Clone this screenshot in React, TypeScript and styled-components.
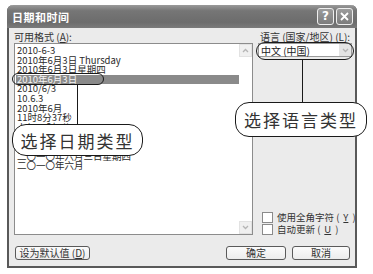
import styled, { createGlobalStyle } from "styled-components";

const Global = createGlobalStyle`
  html, body {
    margin: 0;
    padding: 0;
    background: #fff;
  }
  body {
    font-family: "Noto Sans CJK SC", "Noto Sans", sans-serif;
    color: #222;
  }
`;

const Page = styled.div`
  position: relative;
  width: 373px;
  height: 274px;
  padding: 5px 0 0 7px;
  box-sizing: border-box;
  overflow: hidden;
`;

const Dialog = styled.div`
  width: 350px;
  height: 263px;
  box-sizing: border-box;
  display: flex;
  flex-direction: column;
  background: #ebebeb;
  border: 2px solid #595959;
  border-top: none;
  border-radius: 6px 6px 0 0;
`;

const TitleBar = styled.div`
  height: 23px;
  margin: 0 -2px;
  display: flex;
  align-items: center;
  justify-content: space-between;
  padding: 0 4px 0 5px;
  background: linear-gradient(#9a9a9a 0%, #767676 25%, #6c6c6c 75%, #7a7a7a 100%);
  border-radius: 6px 6px 0 0;
`;

const Title = styled.span`
  color: #fff;
  font-size: 11px;
  font-weight: 700;
  letter-spacing: 0.5px;
`;

const CapButtons = styled.div`
  display: flex;
  gap: 2px;
`;

const CapButton = styled.div`
  width: 17px;
  height: 17px;
  box-sizing: border-box;
  border: 1px solid #eee;
  border-radius: 3px;
  background: linear-gradient(#9c9c9c, #7c7c7c);
  color: #fff;
  font-family: "DejaVu Sans", sans-serif;
  font-weight: 700;
  font-size: 12px;
  line-height: 15px;
  text-align: center;
  display: flex;
  align-items: center;
  justify-content: center;
`;

const Body = styled.div`
  flex: 1;
  display: flex;
  flex-direction: column;
  padding: 3px 3px 6px 5px;
`;

const Main = styled.div`
  display: grid;
  grid-template-columns: 239px 1fr;
  column-gap: 5px;
`;

const Column = styled.div`
  display: flex;
  flex-direction: column;
  min-width: 0;
`;

const Label = styled.div<{ $indent?: number }>`
  font-size: 10px;
  line-height: 12px;
  height: 12px;
  padding-left: ${(p) => p.$indent ?? 0}px;
  color: #333;
  white-space: nowrap;
`;

const ListBox = styled.div`
  height: 192px;
  box-sizing: border-box;
  border: 1px solid #8c8c8c;
  background: #fff;
  display: flex;
  overflow: hidden;
`;

const Items = styled.div`
  flex: 1;
  padding: 2px 0 0 1px;
`;

const Item = styled.div<{ $selected?: boolean }>`
  font-size: 9.5px;
  line-height: 9.6px;
  height: 9.6px;
  padding-left: 1px;
  white-space: nowrap;
  color: ${(p) => (p.$selected ? "#f4f4f4" : "#2a2a2a")};
  background: ${(p) => (p.$selected ? "#8a8a8a" : "transparent")};
`;

const ScrollBar = styled.div`
  width: 13px;
  display: flex;
  flex-direction: column;
  justify-content: space-between;
`;

const ScrollArrow = styled.div`
  height: 13px;
  box-sizing: border-box;
  border: 1px solid #e2e2e2;
  background: #f0f0f0;
  display: flex;
  align-items: center;
  justify-content: center;
`;

const Combo = styled.div`
  width: 94px;
  height: 14px;
  box-sizing: border-box;
  border: 1px solid #9a9a9a;
  background: #fff;
  display: flex;
  align-items: center;
  justify-content: space-between;
  font-size: 10px;
  padding-left: 2px;
`;

const ComboArrow = styled.div`
  width: 12px;
  height: 12px;
  background: #e4e4e4;
  display: flex;
  align-items: center;
  justify-content: center;
`;

const Spacer = styled.div`
  flex: 1;
`;

const CheckRow = styled.div`
  height: 12px;
  display: flex;
  align-items: center;
  gap: 4px;
  padding-left: 4px;
  font-size: 9.5px;
  color: #333;
  white-space: nowrap;
`;

const Box = styled.div`
  flex: none;
  width: 9px;
  height: 9px;
  border: 1px solid #8a8a8a;
  background: #fff;
`;

const Footer = styled.div`
  margin-top: 11px;
  display: flex;
  align-items: center;
  gap: 6px;
  padding-left: 1px;
  padding-right: 2px;
`;

const Button = styled.div<{ $w: number }>`
  width: ${(p) => p.$w}px;
  height: 14px;
  box-sizing: border-box;
  border: 1px solid #5a5a5a;
  border-radius: 3px;
  background: linear-gradient(#fbfbfb, #ececec);
  font-size: 10px;
  line-height: 12px;
  text-align: center;
  color: #333;
  white-space: nowrap;
`;

const Ring = styled.div<{ $x: number; $y: number; $w: number; $h: number }>`
  position: absolute;
  left: ${(p) => p.$x}px;
  top: ${(p) => p.$y}px;
  width: ${(p) => p.$w}px;
  height: ${(p) => p.$h}px;
  box-sizing: border-box;
  border: 1px solid #1a1a1a;
  border-radius: ${(p) => p.$h / 2}px;
`;

const Leader = styled.div<{ $x: number; $y: number; $h: number }>`
  position: absolute;
  left: ${(p) => p.$x}px;
  top: ${(p) => p.$y}px;
  width: 1px;
  height: ${(p) => p.$h}px;
  background: #1a1a1a;
`;

const Callout = styled.div<{ $x: number; $y: number; $w: number; $h: number }>`
  position: absolute;
  left: ${(p) => p.$x}px;
  top: ${(p) => p.$y}px;
  width: ${(p) => p.$w}px;
  height: ${(p) => p.$h}px;
  box-sizing: border-box;
  border: 1px solid #1a1a1a;
  border-radius: 14px;
  background: #fff;
  display: flex;
  align-items: center;
  justify-content: center;
  font-size: 17px;
  letter-spacing: 2px;
  color: #333;
`;

const formats = [
  "2010-6-3",
  "2010年6月3日 Thursday",
  "2010年6月3日星期四",
  "2010年6月3日",
  "2010/6/3",
  "10.6.3",
  "2010年6月",
  "11时8分37秒",
  "上午11时8分",
  "11:08",
  "11:08:37",
  "二〇一〇年六月三日星期四",
  "二〇一〇年六月",
];

const Chevron = ({ up }: { up?: boolean }) => (
  <svg width="7" height="5" viewBox="0 0 7 5">
    <path
      d={up ? "M1 4 L3.5 1.5 L6 4" : "M1 1 L3.5 3.5 L6 1"}
      fill="none"
      stroke="#b5b5b5"
      strokeWidth="1.3"
    />
  </svg>
);

export default function App() {
  return (
    <Page>
      <Global />
      <Dialog>
        <TitleBar>
          <Title>日期和时间</Title>
          <CapButtons>
            <CapButton>?</CapButton>
            <CapButton>
              <svg width="9" height="9" viewBox="0 0 9 9">
                <path d="M1 1 L8 8 M8 1 L1 8" stroke="#fff" strokeWidth="1.8" />
              </svg>
            </CapButton>
          </CapButtons>
        </TitleBar>
        <Body>
          <Main>
            <Column>
              <Label>
                可用格式 (<u>A</u>):
              </Label>
              <ListBox>
                <Items>
                  {formats.map((f, i) => (
                    <Item key={f} $selected={i === 3}>
                      {f}
                    </Item>
                  ))}
                </Items>
                <ScrollBar>
                  <ScrollArrow>
                    <Chevron up />
                  </ScrollArrow>
                  <ScrollArrow>
                    <Chevron />
                  </ScrollArrow>
                </ScrollBar>
              </ListBox>
            </Column>
            <Column>
              <Label $indent={2}>
                语言 (国家/地区) (<u>L</u>):
              </Label>
              <Combo>
                中文 (中国)
                <ComboArrow>
                  <Chevron />
                </ComboArrow>
              </Combo>
              <Spacer />
              <CheckRow>
                <Box />
                使用全角字符 (<u>Y</u>)
              </CheckRow>
              <CheckRow>
                <Box />
                自动更新 (<u>U</u>)
              </CheckRow>
            </Column>
          </Main>
          <Footer>
            <Button $w={75}>
              设为默认值 (<u>D</u>)
            </Button>
            <Spacer />
            <Button $w={60}>确定</Button>
            <Button $w={58}>取消</Button>
          </Footer>
        </Body>
      </Dialog>

      <Ring $x={12} $y={73} $w={92} $h={12} />
      <Leader $x={77} $y={85} $h={39} />
      <Callout $x={12} $y={124} $w={131} $h={32}>
        选择日期类型
      </Callout>

      <Ring $x={256} $y={42} $w={98} $h={18} />
      <Leader $x={302} $y={60} $h={42} />
      <Callout $x={235} $y={102} $w={132} $h={35}>
        选择语言类型
      </Callout>
    </Page>
  );
}
